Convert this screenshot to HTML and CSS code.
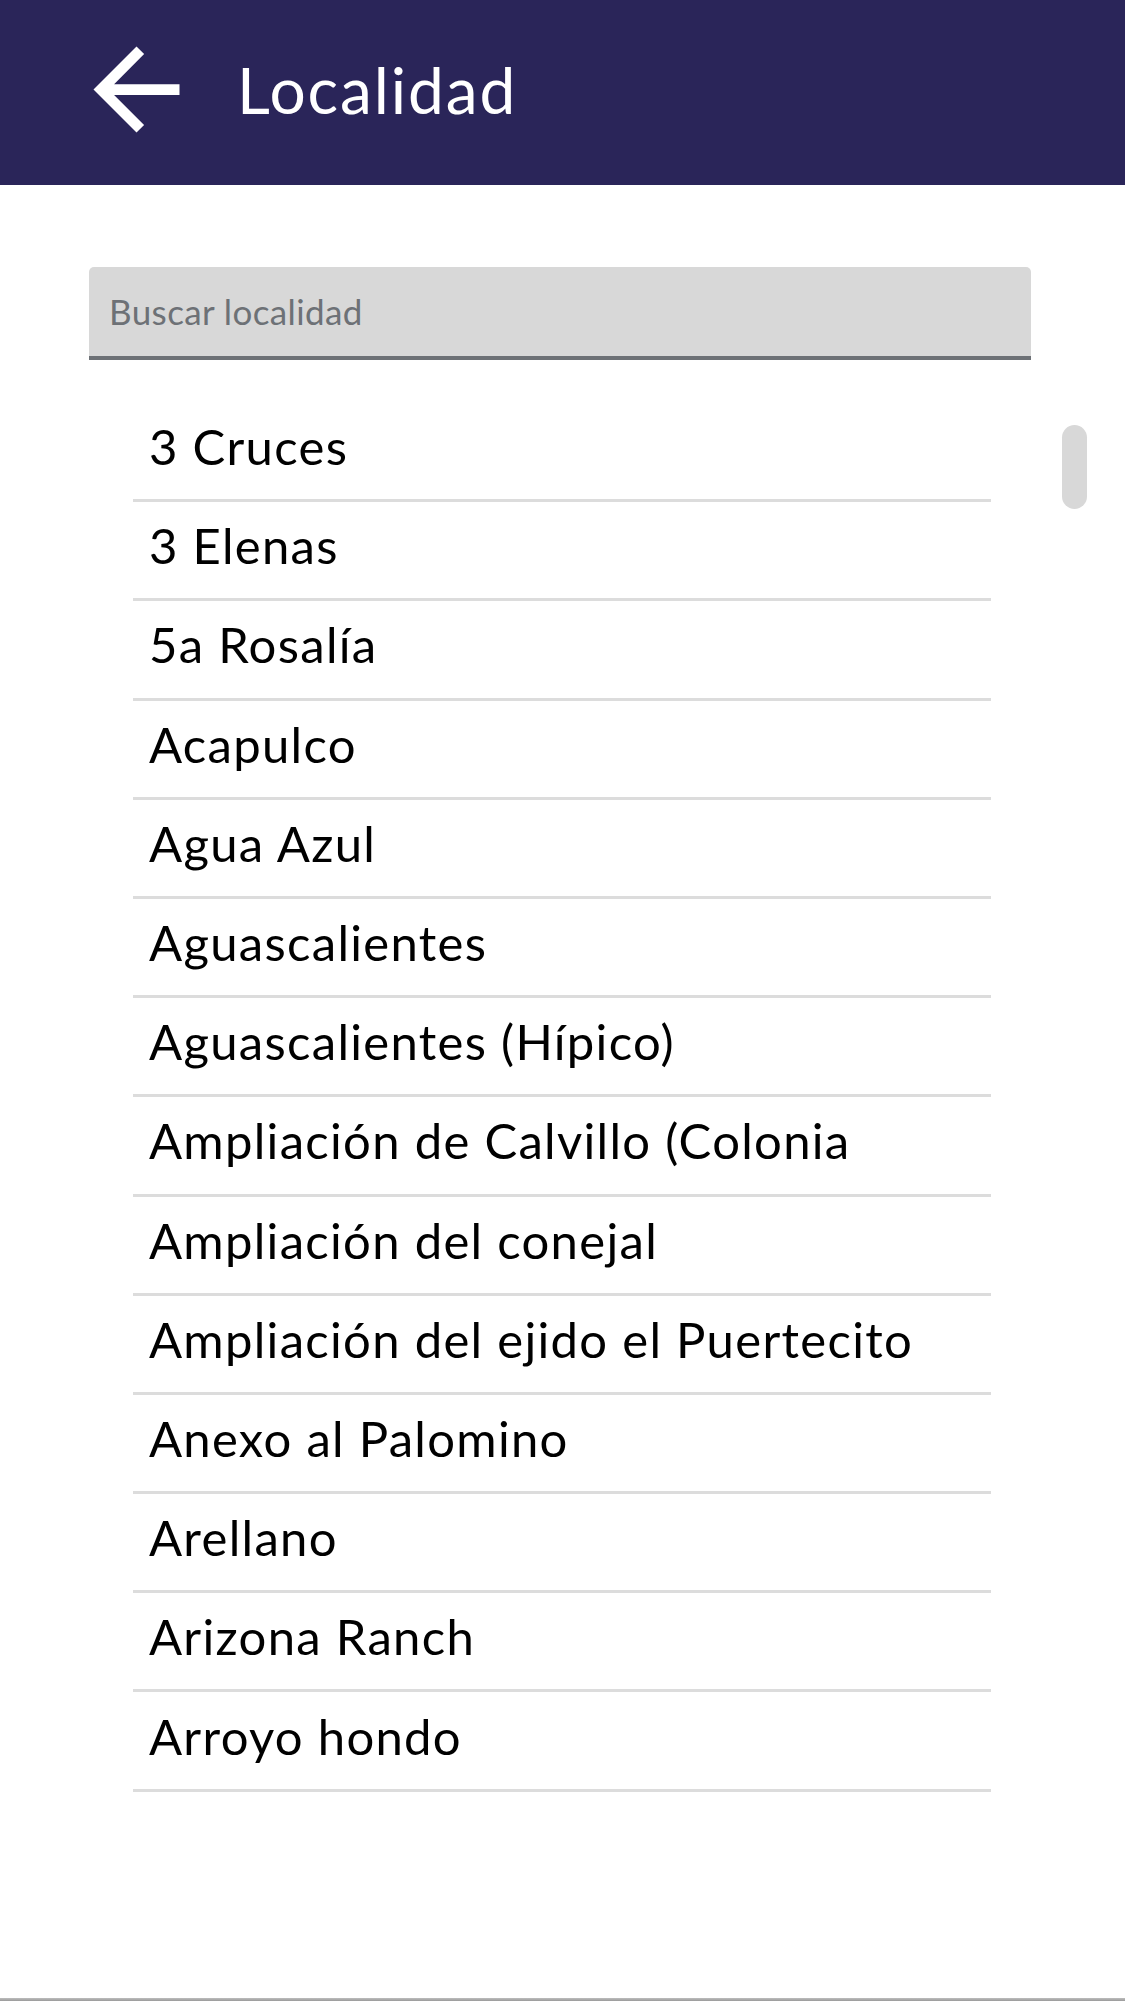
FILE: index.html
```html
<!DOCTYPE html>
<html lang="es">
<head>
<meta charset="utf-8">
<title>Localidad</title>
<link rel="stylesheet" href="styles.css">
</head>
<body>
<div class="page">
  <header class="appbar">
    <svg class="back" viewBox="0 0 24 24" aria-hidden="true">
      <path d="M20 11H7.83l5.59-5.59L12 4l-8 8 8 8 1.41-1.41L7.83 13H20v-2z"/>
    </svg>
    <h1 class="title">Localidad</h1>
  </header>
  <main class="content">
    <div class="search"><span class="placeholder">Buscar localidad</span></div>
    <div class="list-wrap">
      <ul class="list">
        <li class="item">3 Cruces</li>
        <li class="item">3 Elenas</li>
        <li class="item">5a Rosalía</li>
        <li class="item">Acapulco</li>
        <li class="item">Agua Azul</li>
        <li class="item">Aguascalientes</li>
        <li class="item">Aguascalientes (Hípico)</li>
        <li class="item">Ampliación de Calvillo (Colonia</li>
        <li class="item">Ampliación del conejal</li>
        <li class="item">Ampliación del ejido el Puertecito</li>
        <li class="item">Anexo al Palomino</li>
        <li class="item">Arellano</li>
        <li class="item">Arizona Ranch</li>
        <li class="item">Arroyo hondo</li>
      </ul>
      <div class="scrollbar"></div>
    </div>
  </main>
  <div class="bottom-edge"></div>
</div>
</body>
</html>
```
FILE: styles.css
```css
* { box-sizing: border-box; }
html, body { margin: 0; padding: 0; background: #fff; }
body { font-family: "Lato", "Open Sans", sans-serif; color: #000; }

.page {
  min-height: 100vh;
  display: flex;
  flex-direction: column;
}

.appbar {
  height: 185px;
  background: #2a2559;
  display: flex;
  align-items: center;
  padding: 0 0 6px 72px;
  flex-shrink: 0;
}
.back {
  width: 129px;
  height: 129px;
  fill: #fff;
  flex-shrink: 0;
}
.title {
  margin: 0 0 0 36px;
  font-size: 64px;
  font-weight: 400;
  letter-spacing: 1.9px;
  color: #fff;
  line-height: 1;
}

.content {
  flex: 1;
  padding: 82px 94px 0 89px;
}

.search {
  height: 93px;
  background: #d8d8d8;
  border-bottom: 4px solid #6d7176;
  border-radius: 5px 5px 0 0;
  display: flex;
  align-items: center;
  padding: 0 0 0 20px;
}
.placeholder {
  font-size: 35px;
  letter-spacing: 0.4px;
  color: #6d7176;
  line-height: 1;
}

.list-wrap {
  position: relative;
  margin-top: 43px;
  padding-left: 44px;
}
.list {
  list-style: none;
  margin: 0;
  padding: 0;
  width: 858px;
}
.item {
  height: 99.2px;
  border-bottom: 3px solid #dcdcdc;
  display: flex;
  align-items: center;
  padding: 0 0 9px 16px;
  font-size: 49px;
  letter-spacing: 1.3px;
  line-height: 1;
  white-space: nowrap;
}

.scrollbar {
  position: absolute;
  left: 973px;
  top: 22px;
  width: 25px;
  height: 84px;
  border-radius: 13px;
  background: #d8d8d8;
}

.bottom-edge {
  height: 3px;
  background: linear-gradient(#bdbdbd, #9a9a9a);
  flex-shrink: 0;
}
```
